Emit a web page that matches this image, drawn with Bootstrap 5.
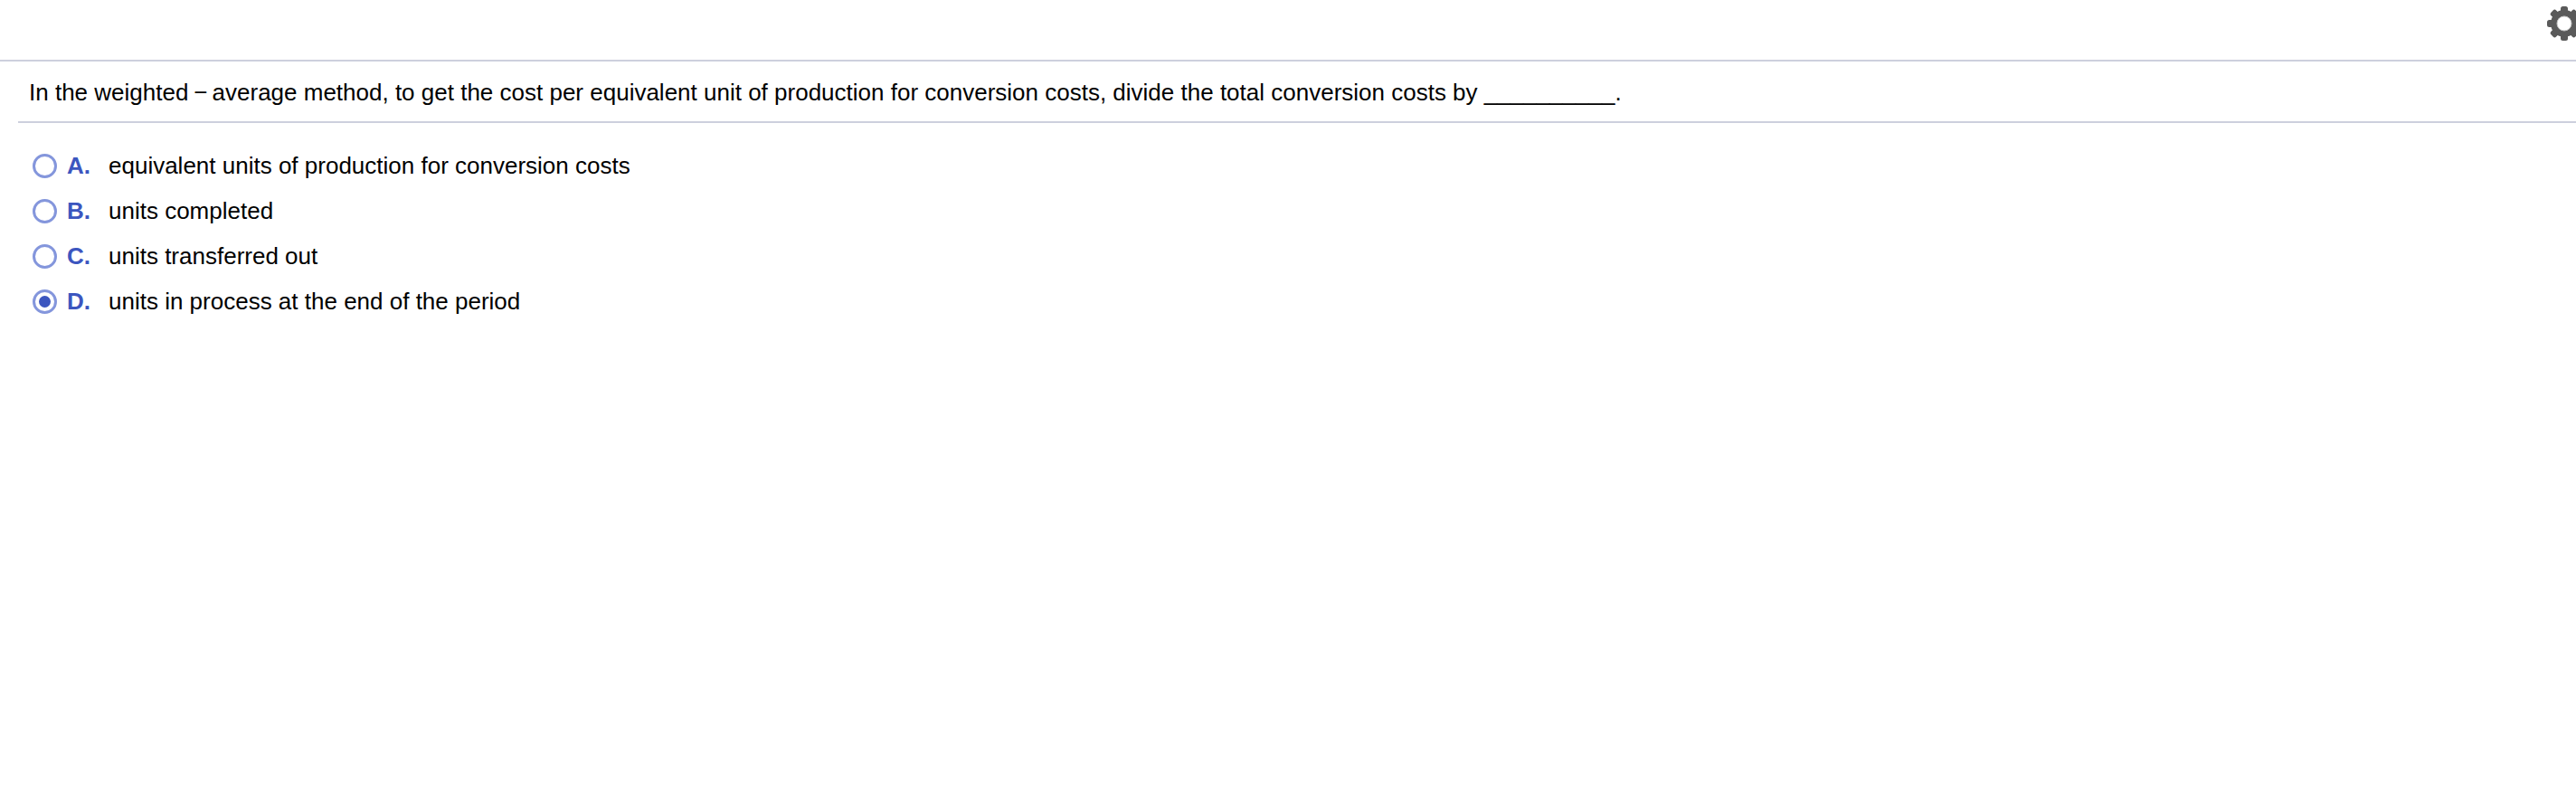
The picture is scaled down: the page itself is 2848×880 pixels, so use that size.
<!DOCTYPE html>
<html lang="en">
<head>
    <meta charset="UTF-8">
    <title>Question</title>
    <link href="https://cdn.jsdelivr.net/npm/bootstrap@5.3.0/dist/css/bootstrap.min.css" rel="stylesheet">
    <style>
        body {
            background: #fff;
            color: #000;
            font-family: "Liberation Sans", Arial, sans-serif;
            font-size: 26px;
            overflow: hidden;
        }
        .top-strip {
            height: 68px;
            border-bottom: 2px solid #cdd0dd;
            overflow: hidden;
        }
        .gear-icon {
            width: 40px;
            height: 40px;
            margin-top: 6px;
            margin-right: -7px;
            flex-shrink: 0;
        }
        .question-text {
            margin-left: 20px;
            padding: 0 0 0 12px;
            height: 68px;
            line-height: 69px;
            border-bottom: 2px solid #cdd0dd;
        }
        .minus-sign {
            margin: 0 5px 0 6px;
        }
        .answer-list {
            margin-top: 22px;
            padding-left: 36px;
        }
        .answer-row {
            height: 50px;
            line-height: 50px;
        }
        .radio-mark {
            width: 27px;
            height: 27px;
            border: 3px solid #8496dc;
            border-radius: 50%;
            flex-shrink: 0;
        }
        .radio-mark.picked::after {
            content: "";
            width: 13px;
            height: 13px;
            border-radius: 50%;
            background: #3c56bf;
        }
        .answer-letter {
            width: 46px;
            margin-left: 11px;
            color: #3c56bf;
            font-weight: 700;
        }
    </style>
</head>
<body>
    <div class="top-strip d-flex justify-content-end">
        <svg class="gear-icon" viewBox="0 0 40 40">
            <g fill="#5a5a5a">
                <rect x="16" y="1" width="8" height="38" rx="2.500"/>
                <rect x="16" y="1" width="8" height="38" rx="2.500" transform="rotate(45 20 20)"/>
                <rect x="16" y="1" width="8" height="38" rx="2.500" transform="rotate(90 20 20)"/>
                <rect x="16" y="1" width="8" height="38" rx="2.500" transform="rotate(135 20 20)"/>
                <circle cx="20" cy="20" r="15"/>
            </g>
            <circle cx="20" cy="20" r="8" fill="#fff" stroke="#c4c4c4"/>
        </svg>
    </div>
    <div class="question-text">In the weighted<span class="minus-sign">−</span>average method, to get the cost per equivalent unit of production for conversion costs, divide the total conversion costs by __________.</div>
    <div class="answer-list">
        <div class="answer-row d-flex align-items-center">
            <span class="radio-mark d-flex align-items-center justify-content-center"></span>
            <span class="answer-letter">A.</span>
            <span>equivalent units of production for conversion costs</span>
        </div>
        <div class="answer-row d-flex align-items-center">
            <span class="radio-mark d-flex align-items-center justify-content-center"></span>
            <span class="answer-letter">B.</span>
            <span>units completed</span>
        </div>
        <div class="answer-row d-flex align-items-center">
            <span class="radio-mark d-flex align-items-center justify-content-center"></span>
            <span class="answer-letter">C.</span>
            <span>units transferred out</span>
        </div>
        <div class="answer-row d-flex align-items-center">
            <span class="radio-mark picked d-flex align-items-center justify-content-center"></span>
            <span class="answer-letter">D.</span>
            <span>units in process at the end of the period</span>
        </div>
    </div>
    <script src="https://cdn.jsdelivr.net/npm/bootstrap@5.3.0/dist/js/bootstrap.bundle.min.js"></script>
</body>
</html>
